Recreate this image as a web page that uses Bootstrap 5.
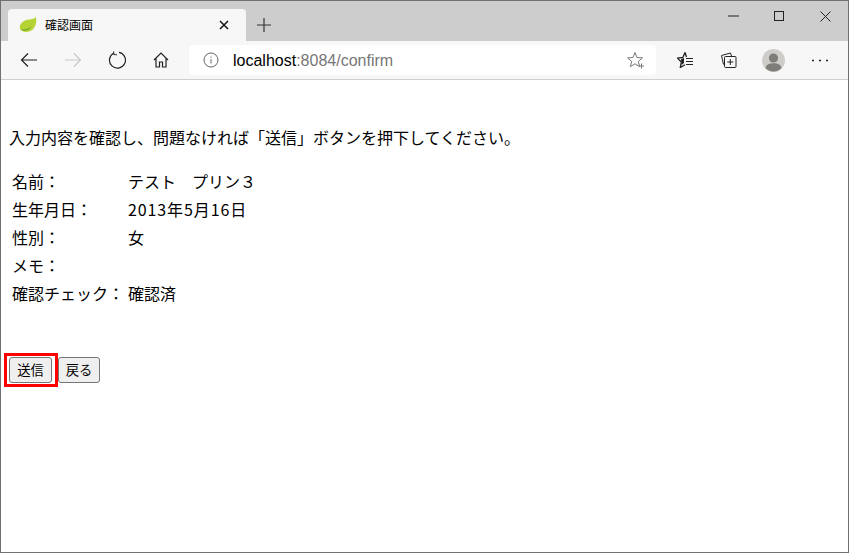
<!DOCTYPE html>
<html lang="ja">
<head>
<meta charset="utf-8">
<title>確認画面</title>
<link href="https://cdn.jsdelivr.net/npm/bootstrap@5.3.0/dist/css/bootstrap.min.css" rel="stylesheet">
<style>
html,body{height:100%;margin:0;background:#fff}
body{font-family:"Noto Sans CJK JP","Liberation Sans",sans-serif;color:#000;font-size:16px}
.frame{width:849px;height:553px;border:1px solid #707070;overflow:hidden;background:#fff}
.strip{height:40px;background:#cdcdcd;padding-left:7px}
.tabbox{width:238px;height:32px;margin-top:8px;background:#f7f7f7;border-radius:4px 4px 0 0;padding-left:11px;font-size:12px}
.tabname{margin-left:8px;width:174px;line-height:16px}
.newtab{margin:17px 0 0 11px}
.wbtns{margin-left:auto}
.wbtn{width:46px;height:30px}
.tools{height:39px;background:#f7f7f7;border-bottom:1px solid #d0d0d0;padding-left:6px}
.tbtn{width:44px;height:38px}
.addr{width:467px;height:30px;background:#fff;border-radius:4px;margin-left:6px;padding:0 11px 0 14px}
.host{margin-left:14px;color:#000;line-height:32px;height:30px;font-family:"Liberation Sans",sans-serif;font-size:16px}
.host span{color:#777}
.right{margin-left:7px}
.lastbtn{margin-left:3px}
.pagebody{padding:0 0 0 8px}
.intro{margin:47px 0 0;line-height:20px;font-size:16px}
.info{margin-top:20px;border-collapse:separate;border-spacing:3px 0}
.info td{height:28px;padding:0;font-size:16px;line-height:28px;white-space:nowrap}
.info td:first-child{width:113px}
.datecell{letter-spacing:.9px}
.acts{margin-top:46px;margin-left:-5px}
.redbox{border:3px solid #f00;padding:1px 3px 1px 2px;display:inline-flex}
.pbtn{height:26px;padding:0;font-size:13.3px;line-height:22px;background:#efefef;border:1px solid #767676;border-radius:3px;color:#000;font-family:inherit;white-space:nowrap}
.sendb{width:43px}
.backb{width:42px;margin-top:4px}
svg{display:block}
</style>
</head>
<body>
<div class="frame d-flex flex-column">
  <div class="strip d-flex align-items-start flex-shrink-0">
    <div class="tabbox d-flex align-items-center">
      <svg width="18" height="16" viewBox="0 0 18 16"><path d="M1 12C0 6 5 3 10 2.500c3-.3 6-1 7-2.500 1 6-1 13-7 14.500-4 1-7 0-9-2.500z" fill="#b5d334"/><path d="M2 12.500c3 .5 8-.5 11-3.500-2 3-5 4.500-8 4.500-1 0-2-.3-3-1z" fill="#5f9a35"/></svg>
      <div class="tabname">確認画面</div>
      <svg width="10" height="10" viewBox="0 0 10 10"><path d="M1 1l8 8M9 1l-8 8" stroke="#111" stroke-width="1.500"/></svg>
    </div>
    <svg class="newtab" width="14" height="14" viewBox="0 0 14 14"><path d="M7 0v14M0 7h14" stroke="#333" stroke-width="1.200"/></svg>
    <div class="wbtns d-flex">
      <div class="wbtn d-flex align-items-center justify-content-center"><svg width="11" height="2"><path d="M0 1h11" stroke="#222"/></svg></div>
      <div class="wbtn d-flex align-items-center justify-content-center"><svg width="10" height="10"><rect x=".5" y=".5" width="9" height="9" fill="none" stroke="#222"/></svg></div>
      <div class="wbtn d-flex align-items-center justify-content-center"><svg width="11" height="11"><path d="M.5.500l10 10M10.500.500l-10 10" stroke="#222"/></svg></div>
    </div>
  </div>
  <div class="tools d-flex align-items-center flex-shrink-0">
    <div class="tbtn d-flex align-items-center justify-content-center"><svg width="18" height="16" viewBox="0 0 18 16"><path d="M17 8H1.500M8 1.500L1.500 8 8 14.500" fill="none" stroke="#222" stroke-width="1.200"/></svg></div>
    <div class="tbtn d-flex align-items-center justify-content-center"><svg width="18" height="16" viewBox="0 0 18 16"><path d="M1 8h15.500M10 1.500L16.500 8 10 14.500" fill="none" stroke="#c8c8c8" stroke-width="1.200"/></svg></div>
    <div class="tbtn d-flex align-items-center justify-content-center"><svg width="18" height="18" viewBox="0 0 18 18"><path d="M5.500 2.200A8 8 0 1 0 11 1.300" fill="none" stroke="#222" stroke-width="1.200"/><path d="M5.500.500L6 3.500 9 3.800" fill="none" stroke="#222" stroke-width="1.100"/></svg></div>
    <div class="tbtn d-flex align-items-center justify-content-center"><svg width="16" height="16" viewBox="0 0 16 16"><path d="M1 8l7-7 7 7M3 6.500V15h3.500v-5h3v5H13V6.500" fill="none" stroke="#222" stroke-width="1.200"/></svg></div>
    <div class="addr d-flex align-items-center">
      <svg width="16" height="16" viewBox="0 0 16 16"><circle cx="8" cy="8" r="7" fill="none" stroke="#666"/><path d="M8 7v4.500M8 4.500v1.200" stroke="#666"/></svg>
      <div class="host">localhost<span>:8084/confirm</span></div>
      <svg class="ms-auto" width="18" height="18" viewBox="0 0 18 18"><path d="M8 1.500l2 5 5.500.4-4.200 3.500 1.300 5.300L8 12.800l-4.600 2.900 1.300-5.300L.5 6.900 6 6.500z" fill="none" stroke="#777"/><path d="M12 15h5M14.500 12.500v5" stroke="#777"/></svg>
    </div>
    <div class="tbtn right d-flex align-items-center justify-content-center"><svg width="16" height="16" viewBox="0 0 16 16"><path d="M8 .500L5.800 5.500.5 6.200 4.300 10 3.300 15.500 8 12.800" fill="none" stroke="#222" stroke-width="1.300"/><path d="M8 .500L9.500 5" fill="none" stroke="#222" stroke-width="1.300"/><path d="M4 7l3-1v5l-2.500 2z" fill="#222"/><path d="M9 6.500h7M9 9.500h7M9 12.500h7" stroke="#222" stroke-width="1.200"/></svg></div>
    <div class="tbtn d-flex align-items-center justify-content-center"><svg width="16" height="16" viewBox="0 0 16 16"><path d="M2.500 12.500L.5 3.500 9.500 1l1 3" fill="none" stroke="#222"/><rect x="3.500" y="4.500" width="11.500" height="11" rx="1" fill="#f7f7f7" stroke="#222"/><path d="M9.300 7v6M6.300 10h6" stroke="#222"/></svg></div>
    <div class="tbtn d-flex align-items-center justify-content-center"><svg width="23" height="23" viewBox="0 0 23 23"><circle cx="11.500" cy="11.500" r="11.500" fill="#cfcdca"/><circle cx="11.500" cy="9" r="4.600" fill="#7f7d7a"/><path d="M3.500 19c1-4 4-4.800 8-4.800s7 .8 8 4.800a11 11 0 0 1-16 0z" fill="#7f7d7a"/></svg></div>
    <div class="tbtn lastbtn d-flex align-items-center justify-content-center"><svg width="16" height="3"><path d="M0 1.500h2M7 1.500h2M14 1.500h2" stroke="#222" stroke-width="1.600"/></svg></div>
  </div>
  <div class="pagebody">
    <p class="intro">入力内容を確認し、問題なければ「送信」ボタンを押下してください。</p>
    <table class="info">
      <tbody>
        <tr><td>名前：</td><td>テスト　プリン３</td></tr>
        <tr><td>生年月日：</td><td class="datecell">2013年5月16日</td></tr>
        <tr><td>性別：</td><td>女</td></tr>
        <tr><td>メモ：</td><td></td></tr>
        <tr><td>確認チェック：</td><td>確認済</td></tr>
      </tbody>
    </table>
    <div class="acts d-flex align-items-start">
      <span class="redbox"><button type="button" class="pbtn sendb">送信</button></span>
      <button type="button" class="pbtn backb">戻る</button>
    </div>
  </div>
</div>
<script src="https://cdn.jsdelivr.net/npm/bootstrap@5.3.0/dist/js/bootstrap.bundle.min.js"></script>
</body>
</html>
